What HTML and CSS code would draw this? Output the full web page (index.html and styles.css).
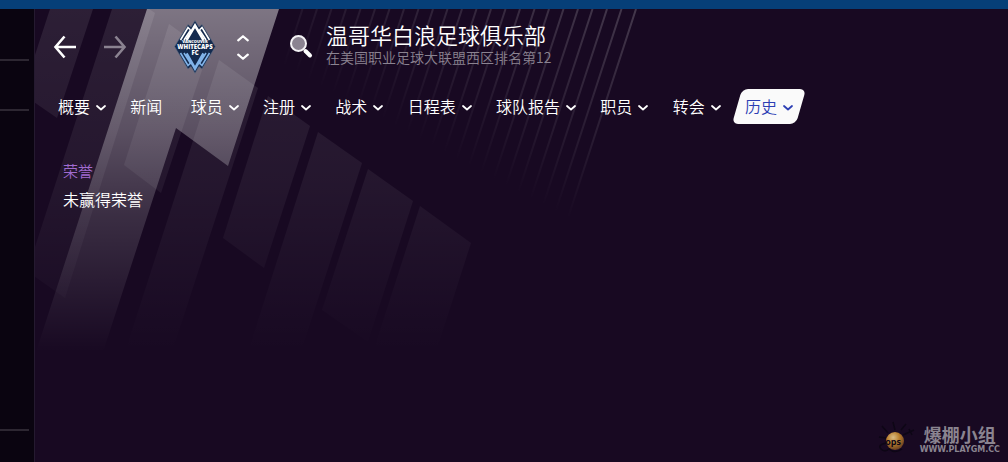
FILE: index.html
```html
<!DOCTYPE html>
<html lang="zh-CN">
<head>
    <meta charset="UTF-8">
    <meta name="viewport" content="width=device-width, initial-scale=1.0">
    <title>温哥华白浪足球俱乐部</title>
    <link rel="stylesheet" href="styles.css">
</head>
<body>
    <svg class="defs" width="0" height="0" aria-hidden="true">
        <symbol id="chevron" viewBox="0 0 10 6">
            <path d="M1 1l4 3.5L9 1" fill="none" stroke="currentColor" stroke-width="1.800" stroke-linecap="round" stroke-linejoin="round"/>
        </symbol>
    </svg>

    <div class="top-strip"></div>
    <div class="app">
        <aside class="sidebar">
            <div class="sidebar-block"></div>
            <div class="sidebar-block second"></div>
            <div class="sidebar-block tall"></div>
        </aside>

        <main class="main">
            <svg class="backdrop" width="974" height="453" viewBox="35 9 974 453" aria-hidden="true">
                <defs>
                    <linearGradient id="beam" gradientUnits="userSpaceOnUse" x1="0" y1="9" x2="0" y2="352">
                        <stop offset="0" stop-color="#fff" stop-opacity=".44"/>
                        <stop offset=".35" stop-color="#fff" stop-opacity=".29"/>
                        <stop offset=".6" stop-color="#fff" stop-opacity=".15"/>
                        <stop offset="1" stop-color="#fff" stop-opacity="0"/>
                    </linearGradient>
                    <linearGradient id="bar" gradientUnits="userSpaceOnUse" x1="0" y1="9" x2="0" y2="352">
                        <stop offset="0" stop-color="#fff" stop-opacity=".09"/>
                        <stop offset=".5" stop-color="#fff" stop-opacity=".055"/>
                        <stop offset="1" stop-color="#fff" stop-opacity="0"/>
                    </linearGradient>
                    <linearGradient id="ray" gradientUnits="userSpaceOnUse" x1="533" y1="201" x2="636" y2="9">
                        <stop offset="0" stop-color="#fff" stop-opacity="0"/>
                        <stop offset="1" stop-color="#fff" stop-opacity=".19"/>
                    </linearGradient>
                </defs>
                <path fill="url(#beam)" d="M147 9H279L228 166L176 128L103 352H36z"/>
                <g fill="url(#bar)">
                    <path d="M50 9H93L57 118L34 102V58z"/>
                    <path d="M112 9H149L155 13L65 298L34 276V250z"/>
                    <path d="M169 24L208 52L161 193L124 165z"/>
                    <path d="M219 60L258 88L172 352H125z"/>
                    <path d="M268 96L310 126L264 268L223 238z"/>
                    <path d="M318 132L362 163L301 352H248z"/>
                    <path d="M368 169L413 201L368 342L322 310z"/>
                    <path d="M420 206L471 243L436 352H373z"/>
                </g>
                <path fill="none" stroke="url(#ray)" stroke-width="2" d="M636 9l-70 215m55.5-215l-70 215m55.5-215l-70 215m55.5-215l-70 215m55.5-215l-70 215m55.5-215l-70 215m55.5-215l-70 215m55.5-215l-70 215m55.5-215l-70 215m55.5-215l-70 215m55.5-215l-70 215m55.5-215l-70 215m55.5-215l-70 215m55.5-215l-70 215m55.5-215l-70 215m55.5-215l-70 215m55.5-215l-70 215m55.5-215l-70 215m55.5-215l-70 215m55.5-215l-70 215m55.5-215l-70 215m55.5-215l-70 215m55.5-215l-70 215m55.5-215l-70 215"/>
            </svg>

            <header class="header">
                <button class="icon-btn" aria-label="后退">
                    <svg width="24" height="24" viewBox="0 0 24 24"><path d="M23 12H2.500M11.500 1.500L2.500 12L11.500 22.500" fill="none" stroke="currentColor" stroke-width="2.600"/></svg>
                </button>
                <button class="icon-btn forward" aria-label="前进">
                    <svg width="24" height="24" viewBox="0 0 24 24"><path d="M1 12H21.500M12.500 1.500L21.500 12L12.500 22.500" fill="none" stroke="currentColor" stroke-width="2.600"/></svg>
                </button>

                <svg class="crest" width="42" height="54" viewBox="0 0 42 54">
                    <path d="M21 .5L17 7L14 4.500L.6 26.500L14 49L17 46.500L21 53.300L25 46.500L28 49L41.400 26.500L28 4.500L25 7z" fill="#142a4e" stroke="#5c6c84" stroke-width=".6"/>
                    <path d="M12.500 20L21 5.500L29.500 20" fill="none" stroke="#fff" stroke-width="2.600"/>
                    <path d="M6.500 20L14 7.500L16 9.500M10 20L17 9.500M35.500 20L28 7.500L26 9.500M32 20L25 9.500" fill="none" stroke="#fff" stroke-width="1.600"/>
                    <path d="M12.500 33.500L21 48.500L29.500 33.500" fill="none" stroke="#82b4ea" stroke-width="2.600"/>
                    <path d="M6.500 33L14 45.500L16 43.500M10 33L17 44M35.500 33L28 45.500L26 43.500M32 33L25 44" fill="none" stroke="#82b4ea" stroke-width="1.600"/>
                    <text class="crest-small" x="21" y="23">VANCOUVER</text>
                    <text class="crest-name" x="21" y="29">WHITECAPS</text>
                    <text class="crest-fc" x="21" y="35">FC</text>
                </svg>

                <div class="switcher">
                    <button class="icon-btn" aria-label="上一个"><svg class="up" width="12" height="8"><use href="#chevron"/></svg></button>
                    <button class="icon-btn" aria-label="下一个"><svg width="12" height="8"><use href="#chevron"/></svg></button>
                </div>

                <button class="icon-btn search" aria-label="搜索">
                    <svg width="24" height="24" viewBox="0 0 24 24">
                        <circle cx="9.500" cy="8.500" r="7.500" fill="#8b8391" stroke="#f4f2f5" stroke-width="2"/>
                        <path d="M16.500 16L21 20.500" stroke="#fff" stroke-width="4" stroke-linecap="round"/>
                    </svg>
                </button>

                <div class="titles">
                    <h1>温哥华白浪足球俱乐部</h1>
                    <p>在美国职业足球大联盟西区排名第12</p>
                </div>
            </header>

            <nav class="nav">
                <button class="tab">概要<svg class="caret"><use href="#chevron"/></svg></button>
                <a class="tab plain" href="#">新闻</a>
                <button class="tab">球员<svg class="caret"><use href="#chevron"/></svg></button>
                <button class="tab">注册<svg class="caret"><use href="#chevron"/></svg></button>
                <button class="tab">战术<svg class="caret"><use href="#chevron"/></svg></button>
                <button class="tab">日程表<svg class="caret"><use href="#chevron"/></svg></button>
                <button class="tab">球队报告<svg class="caret"><use href="#chevron"/></svg></button>
                <button class="tab">职员<svg class="caret"><use href="#chevron"/></svg></button>
                <button class="tab">转会<svg class="caret"><use href="#chevron"/></svg></button>
                <button class="tab active">历史<svg class="caret"><use href="#chevron"/></svg></button>
            </nav>

            <section class="honours">
                <h2>荣誉</h2>
                <p>未赢得荣誉</p>
            </section>

            <div class="watermark">
                <svg width="40" height="36" viewBox="0 0 40 36" aria-hidden="true">
                    <defs>
                        <radialGradient id="ball" cx=".4" cy=".3" r=".7">
                            <stop offset="0" stop-color="#d9bb84"/>
                            <stop offset=".5" stop-color="#b87d2c"/>
                            <stop offset="1" stop-color="#6a4022"/>
                        </radialGradient>
                    </defs>
                    <path d="M11 12L5 5M18 9L16 1M24 9L29 3M26 14L37 9M32 8l3 6M9 17L2 16M9 22Q0 24 4 28T13 27M12 28Q18 33 25 28" fill="none" stroke="#0d0615" stroke-width="1.500"/>
                    <circle cx="18" cy="20" r="9" fill="url(#ball)"/>
                    <text class="ball-text" x="16" y="24">ops</text>
                </svg>
                <div class="watermark-text">
                    <strong>爆棚小组</strong>
                    <span>WWW.PLAYGM.CC</span>
                </div>
            </div>
        </main>
    </div>
</body>
</html>
```

FILE: styles.css
```css
* {
    box-sizing: border-box;
}
body {
    margin: 0;
    min-height: 100vh;
    display: flex;
    flex-direction: column;
    background: #180922;
    color: #fff;
    font-family: "Noto Sans CJK SC", "Noto Sans", sans-serif;
    font-size: 16px;
    font-weight: 350;
}
h1, h2, p {
    margin: 0;
    font-weight: 350;
}
button {
    padding: 0;
    border: none;
    background: none;
    color: inherit;
    font: inherit;
    cursor: pointer;
}
svg {
    display: block;
}
.defs {
    position: absolute;
}
.top-strip {
    height: 9px;
    background: #063f78;
}
.app {
    flex: 1;
    display: flex;
}

/* left rail */
.sidebar {
    width: 34px;
    padding-right: 5px;
    background: #0a0410;
}
.sidebar-block {
    height: 52px;
    border-bottom: 2px solid #2d2732;
}
.sidebar-block.second {
    height: 50px;
}
.sidebar-block.tall {
    height: 320px;
}

.main {
    flex: 1;
    min-width: 0;
    position: relative;
    overflow: hidden;
    isolation: isolate;
    border-left: 1px solid #251a30;
}
.backdrop {
    position: absolute;
    top: 0;
    left: 0;
    z-index: -1;
}

/* header */
.header {
    display: flex;
    align-items: center;
    height: 76px;
    padding-left: 18px;
}
.icon-btn {
    display: block;
}
.forward {
    margin-left: 26px;
    color: #8b8391;
}
.crest {
    margin-left: 47px;
}
.crest text {
    fill: #fff;
    font-family: "Open Sans", sans-serif;
    font-weight: 800;
    text-anchor: middle;
}
.crest .crest-small {
    font-size: 4px;
}
.crest .crest-name {
    font-size: 6px;
}
.crest .crest-fc {
    font-size: 6px;
}
.switcher {
    display: flex;
    flex-direction: column;
    gap: 11px;
    margin-left: 21px;
}
.up {
    transform: rotate(180deg);
}
.search {
    margin-left: 40px;
}
.titles {
    margin-left: 13px;
    padding-bottom: 6px;
}
.titles h1 {
    font-size: 22px;
    line-height: 26px;
}
.titles p {
    font-size: 14px;
    line-height: 20px;
    color: #8b8391;
}

/* tabs */
.nav {
    display: flex;
    justify-content: space-between;
    max-width: 770px;
    padding: 4px 0 4px 11px;
}
.tab {
    position: relative;
    display: flex;
    align-items: center;
    height: 35px;
    padding: 0 12px 2px;
    color: #fff;
    text-decoration: none;
    white-space: nowrap;
}
.tab.plain {
    margin-right: 4px;
}
.caret {
    width: 10px;
    height: 6px;
    margin: 4px 0 0 6px;
}
.tab.active {
    color: #2d3fb4;
    isolation: isolate;
}
.tab.active::before {
    content: "";
    position: absolute;
    inset: 0 4px;
    z-index: -1;
    border-radius: 6px;
    background: #fafafa;
    transform: skewX(-16deg);
}

.honours {
    padding: 28px;
}
.honours h2 {
    font-size: 15px;
    line-height: 29px;
    color: #a16bd0;
}
.honours p {
    line-height: 28px;
}

.watermark {
    position: absolute;
    right: 8px;
    bottom: 5px;
    display: flex;
    align-items: center;
    gap: 3px;
    color: #8a8490;
}
.ball-text {
    fill: #0d0615;
    font: 700 9px "Open Sans", sans-serif;
    text-anchor: middle;
}
.watermark-text {
    display: flex;
    flex-direction: column;
    align-items: center;
}
.watermark-text strong {
    font-size: 18px;
    font-weight: 700;
    line-height: 22px;
}
.watermark-text span {
    font: 700 8px/10px "DejaVu Sans", sans-serif;
}
```
